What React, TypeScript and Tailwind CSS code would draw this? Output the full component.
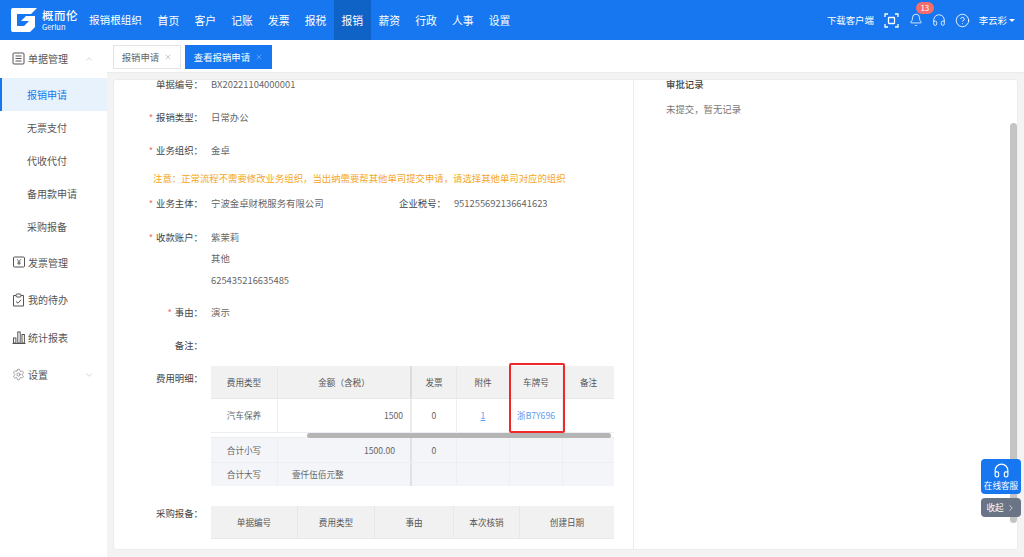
import React from "react";
import { ChevronUp, ChevronDown, ChevronRight, X, Settings, Headphones, Bell, CircleHelp } from "lucide-react";

const font = "font-['Noto_Sans_CJK_SC','Liberation_Sans',sans-serif]";

const Logo = () => (
  <svg width="26" height="24" viewBox="0 0 26 24" className="shrink-0">
    <path d="M2 0H26L20 6H6V18H13L18 13H10L15 8H24V19L19 24H2A2 2 0 0 1 0 22V2A2 2 0 0 1 2 0Z" fill="#fff" />
  </svg>
);

const ScanIcon = () => (
  <svg width="15" height="15" viewBox="0 0 15 15" fill="none" stroke="#fff" strokeWidth="1.3">
    <path d="M1 4V1H4M11 1H14V4M14 11V14H11M4 14H1V11" />
    <rect x="4.5" y="4.5" width="6" height="6" rx="0.5" />
  </svg>
);

const DocIcon = () => (
  <svg width="13" height="13" viewBox="0 0 13 13" fill="none" stroke="#555" strokeWidth="1">
    <rect x="1" y="1" width="11" height="11" rx="1" />
    <path d="M3.5 4H9.5M3.5 6.5H9.5M3.5 9H9.5" />
  </svg>
);
const YenIcon = () => (
  <svg width="12" height="12" viewBox="0 0 12 12" fill="none" stroke="#555" strokeWidth="1">
    <rect x="0.5" y="1" width="11" height="10" rx="1" />
    <path d="M4.2 3.2L6 5.6L7.8 3.2M6 5.6V9M4.4 6.2H7.6M4.4 7.6H7.6" strokeWidth="0.8" />
  </svg>
);
const TodoIcon = () => (
  <svg width="13" height="14" viewBox="0 0 13 14" fill="none" stroke="#555" strokeWidth="1">
    <path d="M4 2.5H1.5V13H11.5V2.5H9" />
    <rect x="4" y="1" width="5" height="3" rx="1" />
    <path d="M4 8.5L6 10.2L9 6.8" />
  </svg>
);
const ChartIcon = () => (
  <svg width="14" height="13" viewBox="0 0 14 13" fill="none" stroke="#555" strokeWidth="1">
    <path d="M0.5 12.5H13.5" />
    <rect x="1.5" y="7" width="2.4" height="5" />
    <rect x="5.8" y="1" width="2.4" height="11" />
    <rect x="10" y="3.5" width="2.4" height="8.5" />
  </svg>
);

const SideTop = ({ icon, label, arrow }: { icon: React.ReactNode; label: string; arrow?: "up" | "down" }) => (
  <div className="flex h-[37.5px] items-center pl-[10px] text-[10px] text-[#555]">
    <span className="flex w-[17px] justify-center">{icon}</span>
    <span className="ml-[1px] flex-1">{label}</span>
    {arrow === "up" && <ChevronUp size={10} strokeWidth={1} className="mr-[13px] text-[#999]" />}
    {arrow === "down" && <ChevronDown size={10} strokeWidth={1} className="mr-[13px] text-[#999]" />}
  </div>
);

const SideSub = ({ label, active }: { label: string; active?: boolean }) => (
  <div
    className={
      "flex h-[33.2px] items-center border-l-2 pl-[25px] text-[10px] " +
      (active ? "border-[#1677f0] bg-[#e8f2fd] text-[#1677f0]" : "border-transparent text-[#555]")
    }
  >
    {label}
  </div>
);

const Row = ({ label, req, h, children }: { label: string; req?: boolean; h: string; children?: React.ReactNode }) => (
  <div className={"flex items-center " + h}>
    <div className="w-[89px] shrink-0 text-right text-[#444]">
      {req && <span className="mr-[3px] text-[#f56c6c]">*</span>}
      {label}：
    </div>
    <div className="ml-[8px] flex-1 text-[#666]">{children}</div>
  </div>
);

const Th = ({ w, children, cls = "" }: { w: string; children?: React.ReactNode; cls?: string }) => (
  <div className={"flex h-full shrink-0 items-center justify-center border-r border-[#e6e8ec] bg-[#f1f1f1] text-[#555] " + w + " " + cls}>
    {children}
  </div>
);

const Td = ({ w, children, cls = "" }: { w: string; children?: React.ReactNode; cls?: string }) => (
  <div className={"flex h-full shrink-0 items-center justify-center border-r border-[#eceef2] " + w + " " + cls}>
    {children}
  </div>
);

export default function App() {
  const nav = ["首页", "客户", "记账", "发票", "报税", "报销", "薪资", "行政", "人事", "设置"];
  return (
    <div className={"relative flex h-[557px] w-[1024px] flex-col overflow-hidden bg-[#f3f3f3] text-[9.4px] " + font}>
      <header className="flex h-[40px] shrink-0 items-center bg-[#1677f0] text-white">
        <div className="ml-[11px]"><Logo /></div>
        <div className="ml-[5px] flex flex-col leading-none">
          <span className="text-[11.5px] font-medium leading-[13px] tracking-[0.5px]">概而伦</span>
          <span className="text-[7.5px] leading-[9px]">Gerlun</span>
        </div>
        <div className="ml-[11px] w-[61px] text-[10.6px]">报销根组织</div>
        <nav className="flex h-full text-[10.8px]">
          {nav.map((n) => (
            <div key={n} className={"flex h-full w-[36.8px] items-center justify-center " + (n === "报销" ? "bg-[#0f62c6]" : "")}>
              {n}
            </div>
          ))}
        </nav>
        <div className="ml-auto flex items-center pr-[9px]">
          <span className="text-[9.4px]">下载客户端</span>
          <span className="ml-[10px]"><ScanIcon /></span>
          <span className="relative ml-[10px]">
            <Bell size={14} strokeWidth={1.4} />
            <span className="absolute left-[7px] top-[-11px] flex h-[12px] w-[18px] items-center justify-center rounded-full bg-[#f56c6c] text-[8px] leading-none">13</span>
          </span>
          <span className="ml-[9px]"><Headphones size={14} strokeWidth={1.4} /></span>
          <span className="ml-[9px]"><CircleHelp size={15} strokeWidth={1.4} /></span>
          <span className="ml-[9px] text-[9.4px]">李云彩</span>
          <span className="ml-[2px] h-0 w-0 border-x-[3px] border-t-[3px] border-x-transparent border-t-white" />
        </div>
      </header>

      <div className="flex min-h-0 flex-1">
        <aside className="w-[107px] shrink-0 bg-white">
          <SideTop icon={<DocIcon />} label="单据管理" arrow="up" />
          <SideSub label="报销申请" active />
          <SideSub label="无票支付" />
          <SideSub label="代收代付" />
          <SideSub label="备用款申请" />
          <SideSub label="采购报备" />
          <SideTop icon={<YenIcon />} label="发票管理" />
          <SideTop icon={<TodoIcon />} label="我的待办" />
          <SideTop icon={<ChartIcon />} label="统计报表" />
          <SideTop icon={<Settings size={13} strokeWidth={1} />} label="设置" arrow="down" />
        </aside>

        <main className="flex min-w-0 flex-1 flex-col">
          <div className="flex h-[33px] shrink-0 items-start gap-[4px] border-b border-[#ececec] bg-white pl-[6px] pt-[5px] text-[9.4px]">
            <div className="flex h-[24px] w-[68px] items-center justify-center gap-[5px] border border-[#e4e4e4] text-[#666]">
              报销申请 <X size={8} strokeWidth={1} />
            </div>
            <div className="flex h-[24px] w-[87px] items-center justify-center gap-[5px] bg-[#1677f0] text-white">
              查看报销申请 <X size={8} strokeWidth={1} />
            </div>
          </div>

          <div className="ml-[6px] mr-[6px] mt-[6px] mb-[7px] flex min-h-0 flex-1 overflow-hidden rounded-[3px] border border-[#ececec] bg-white">
            <section className="w-[520px] shrink-0 border-r border-[#ececec]">
              <div className="-mt-[12px]">
                <Row label="单据编号" h="h-[33px]">BX20221104000001</Row>
                <Row label="报销类型" req h="h-[33px]">日常办公</Row>
                <Row label="业务组织" req h="h-[33px]">金卓</Row>
                <div className="flex h-[23px] items-center pl-[39px] text-[#f5a623]">
                  注意：正常流程不需要修改业务组织，当出纳需要帮其他单司提交申请，请选择其他单司对应的组织
                </div>
                <div className="flex h-[27px] items-center">
                  <div className="w-[89px] shrink-0 text-right text-[#444]">
                    <span className="mr-[3px] text-[#f56c6c]">*</span>业务主体：
                  </div>
                  <div className="ml-[8px] w-[188px] text-[#666]">宁波金卓财税服务有限公司</div>
                  <div className="text-[#444]">企业税号：</div>
                  <div className="ml-[8px] text-[#666]">951255692136641623</div>
                </div>
                <div className="mt-[9.5px] flex">
                  <div className="h-[21.5px] w-[89px] shrink-0 text-right leading-[21.5px] text-[#444]">
                    <span className="mr-[3px] text-[#f56c6c]">*</span>收款账户：
                  </div>
                  <div className="ml-[8px] text-[#666] leading-[21.5px]">
                    <div>紫茉莉</div>
                    <div>其他</div>
                    <div>625435216635485</div>
                  </div>
                </div>
                <div className="mt-[5px]">
                  <Row label="事由" req h="h-[33px]">演示</Row>
                  <Row label="备注" h="h-[33px]" />
                </div>

                <div className="mt-[4px] flex">
                  <div className="w-[89px] shrink-0 text-right text-[#444] leading-[24px]">费用明细：</div>
                  <div className="relative ml-[8px] w-[403px] text-[8.6px]">
                    <div className="flex h-[33px] border-b border-[#e6e8ec]">
                      <Th w="w-[67px]">费用类型</Th>
                      <Th w="w-[134px]" cls="border-r-2 border-r-[#dcdcdc]">金额（含税）</Th>
                      <Th w="w-[45px]">发票</Th>
                      <Th w="w-[53px]">附件</Th>
                      <Th w="w-[53px]">车牌号</Th>
                      <Th w="w-[51px]" cls="border-r-0">备注</Th>
                    </div>
                    <div className="flex h-[33px] text-[#666]">
                      <Td w="w-[67px]">汽车保养</Td>
                      <Td w="w-[134px]" cls="justify-end pr-[7px] border-r-2 border-r-[#ececec]">1500</Td>
                      <Td w="w-[45px]">0</Td>
                      <Td w="w-[53px]"><span className="text-[#5b9bf0] underline">1</span></Td>
                      <Td w="w-[53px]"><span className="text-[#5b9bf0]">浙B7Y696</span></Td>
                      <Td w="w-[51px]" cls="border-r-0" />
                    </div>
                    <div className="h-[6px] border-y border-[#eceef2] bg-white pl-[96px]">
                      <div className="h-[5px] w-[304px] rounded-full bg-[#b5b5b5]" />
                    </div>
                    <div className="flex h-[24px] bg-[#f3f5f9] text-[#666]">
                      <Td w="w-[67px]">合计小写</Td>
                      <Td w="w-[134px]" cls="justify-end pr-[15px] border-r-2 border-r-[#dfe1e5]">1500.00</Td>
                      <Td w="w-[45px]">0</Td>
                      <Td w="w-[53px]" />
                      <Td w="w-[53px]" />
                      <Td w="w-[51px]" cls="border-r-0" />
                    </div>
                    <div className="flex h-[24px] border-t border-[#eceef2] bg-[#f3f5f9] text-[#666]">
                      <Td w="w-[67px]">合计大写</Td>
                      <Td w="w-[134px]" cls="justify-start pl-[14px] border-r-2 border-r-[#dfe1e5]">壹仟伍佰元整</Td>
                      <Td w="w-[45px]" />
                      <Td w="w-[53px]" />
                      <Td w="w-[53px]" />
                      <Td w="w-[51px]" cls="border-r-0" />
                    </div>
                    <div className="absolute left-[298px] top-[-3px] h-[70px] w-[56px] rounded-[2px] border-2 border-[#f0282a]" />
                  </div>
                </div>

                <div className="mt-[20px] flex">
                  <div className="w-[89px] shrink-0 text-right text-[#444] leading-[15px]">采购报备：</div>
                  <div className="ml-[8px] flex h-[33px] w-[403px] border-b border-[#e6e8ec] text-[8.6px]">
                    <Th w="w-[87px]">单据编号</Th>
                    <Th w="w-[77px]">费用类型</Th>
                    <Th w="w-[79px]">事由</Th>
                    <Th w="w-[66px]">本次核销</Th>
                    <Th w="w-[94px]" cls="border-r-0">创建日期</Th>
                  </div>
                </div>
              </div>
            </section>
            <section className="relative flex-1 pl-[32px]">
              <div className="-mt-[1px] leading-[11px] font-medium text-[#444]">审批记录</div>
              <div className="mt-[12px] text-[#777]">未提交，暂无记录</div>
              <div className="absolute right-0 top-[43px] h-[400px] w-[7px] rounded-full bg-[#c4c4c4]" />
            </section>
          </div>
        </main>
      </div>

      <div className="absolute left-[981px] top-[459px] flex h-[35px] w-[40px] flex-col items-center justify-center rounded-[4px] bg-[#1677f0] text-white">
        <Headphones size={17} strokeWidth={1.6} />
        <span className="mt-[1px] text-[8.6px] leading-[11px]">在线客服</span>
      </div>
      <div className="absolute left-[981px] top-[498px] flex h-[19px] w-[40px] items-center justify-center rounded-[4px] bg-[#6b7485] text-[8.6px] text-white">
        收起<ChevronRight size={10} strokeWidth={1.5} className="ml-[2px]" />
      </div>
    </div>
  );
}
